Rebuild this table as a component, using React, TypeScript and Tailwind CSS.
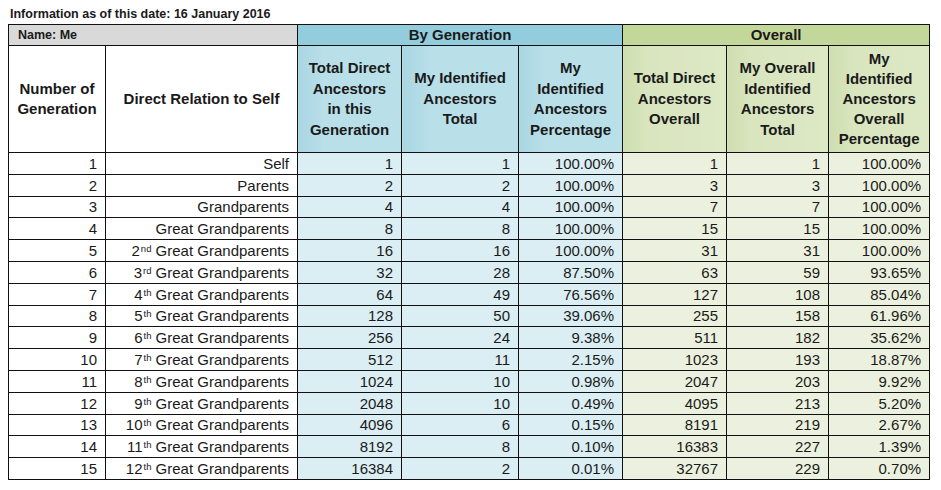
import React from "react";

type Row = {
  gen: number;
  rel: string;
  ord?: string;
  sup?: string;
  total: number;
  mine: number;
  pct: string;
  totalAll: number;
  mineAll: number;
  pctAll: string;
};

const GG = "Great Grandparents";

const ROWS: Row[] = [
  { gen: 1, rel: "Self", total: 1, mine: 1, pct: "100.00%", totalAll: 1, mineAll: 1, pctAll: "100.00%" },
  { gen: 2, rel: "Parents", total: 2, mine: 2, pct: "100.00%", totalAll: 3, mineAll: 3, pctAll: "100.00%" },
  { gen: 3, rel: "Grandparents", total: 4, mine: 4, pct: "100.00%", totalAll: 7, mineAll: 7, pctAll: "100.00%" },
  { gen: 4, rel: GG, total: 8, mine: 8, pct: "100.00%", totalAll: 15, mineAll: 15, pctAll: "100.00%" },
  { gen: 5, rel: GG, ord: "2", sup: "nd", total: 16, mine: 16, pct: "100.00%", totalAll: 31, mineAll: 31, pctAll: "100.00%" },
  { gen: 6, rel: GG, ord: "3", sup: "rd", total: 32, mine: 28, pct: "87.50%", totalAll: 63, mineAll: 59, pctAll: "93.65%" },
  { gen: 7, rel: GG, ord: "4", sup: "th", total: 64, mine: 49, pct: "76.56%", totalAll: 127, mineAll: 108, pctAll: "85.04%" },
  { gen: 8, rel: GG, ord: "5", sup: "th", total: 128, mine: 50, pct: "39.06%", totalAll: 255, mineAll: 158, pctAll: "61.96%" },
  { gen: 9, rel: GG, ord: "6", sup: "th", total: 256, mine: 24, pct: "9.38%", totalAll: 511, mineAll: 182, pctAll: "35.62%" },
  { gen: 10, rel: GG, ord: "7", sup: "th", total: 512, mine: 11, pct: "2.15%", totalAll: 1023, mineAll: 193, pctAll: "18.87%" },
  { gen: 11, rel: GG, ord: "8", sup: "th", total: 1024, mine: 10, pct: "0.98%", totalAll: 2047, mineAll: 203, pctAll: "9.92%" },
  { gen: 12, rel: GG, ord: "9", sup: "th", total: 2048, mine: 10, pct: "0.49%", totalAll: 4095, mineAll: 213, pctAll: "5.20%" },
  { gen: 13, rel: GG, ord: "10", sup: "th", total: 4096, mine: 6, pct: "0.15%", totalAll: 8191, mineAll: 219, pctAll: "2.67%" },
  { gen: 14, rel: GG, ord: "11", sup: "th", total: 8192, mine: 8, pct: "0.10%", totalAll: 16383, mineAll: 227, pctAll: "1.39%" },
  { gen: 15, rel: GG, ord: "12", sup: "th", total: 16384, mine: 2, pct: "0.01%", totalAll: 32767, mineAll: 229, pctAll: "0.70%" },
];

const border = "border border-[#111]";
const headCell = `${border} px-[2px] text-center align-middle text-[15px] font-bold leading-[20.5px]`;
const dataCell = `${border} h-[21.8px] p-0 pr-[8px] pb-[1px] text-right align-bottom text-[15px] leading-[18px]`;
// header cells carry a slight shade toward their left edge, like the sheet's fill
const blueHead = "bg-gradient-to-r from-[#a9d6e2] via-[#b9dfe9] via-25% to-[#b9dfe9]";
const greenHead = "bg-gradient-to-r from-[#cfdeb0] via-[#d9e5bf] via-25% to-[#dde8c4]";
const blueData = "bg-[#daeef3]";
const greenData = "bg-[#ebf1de]";

export default function App() {
  return (
    <div className="h-[490px] w-[941px] overflow-hidden bg-white font-['Liberation_Sans',Arial,sans-serif] text-[#1a1a1a]">
      <div className="h-[24px] pl-[10px] pt-[7px] text-[12.5px] font-bold leading-[14px]">
        Information as of this date: 16 January 2016
      </div>
      <table className="ml-[8px] w-[921px] table-fixed border-collapse">
        <colgroup>
          <col className="w-[97px]" />
          <col className="w-[192px]" />
          <col className="w-[104px]" />
          <col className="w-[117px]" />
          <col className="w-[104px]" />
          <col className="w-[104px]" />
          <col className="w-[102px]" />
          <col className="w-[101px]" />
        </colgroup>
        <thead>
          <tr className="h-[21px]">
            <th
              colSpan={2}
              className={`${border} bg-[#d9d9d9] p-0 pl-[9px] text-left align-middle text-[12.5px] font-bold leading-[14px]`}
            >
              Name: Me
            </th>
            <th colSpan={3} className={`${border} bg-[#93cddd] p-0 text-center align-middle text-[15px] font-bold leading-[18px]`}>
              By Generation
            </th>
            <th colSpan={3} className={`${border} bg-[#c4d79b] p-0 text-center align-middle text-[15px] font-bold leading-[18px]`}>
              Overall
            </th>
          </tr>
          <tr className="h-[107px]">
            <th className={`${headCell} bg-white`}>
              Number of
              <br />
              Generation
            </th>
            <th className={`${headCell} bg-white`}>Direct Relation to Self</th>
            <th className={`${headCell} ${blueHead}`}>
              Total Direct
              <br />
              Ancestors
              <br />
              in this
              <br />
              Generation
            </th>
            <th className={`${headCell} ${blueHead}`}>
              My Identified
              <br />
              Ancestors
              <br />
              Total
            </th>
            <th className={`${headCell} ${blueHead}`}>
              My
              <br />
              Identified
              <br />
              Ancestors
              <br />
              Percentage
            </th>
            <th className={`${headCell} ${greenHead}`}>
              Total Direct
              <br />
              Ancestors
              <br />
              Overall
            </th>
            <th className={`${headCell} ${greenHead}`}>
              My Overall
              <br />
              Identified
              <br />
              Ancestors
              <br />
              Total
            </th>
            <th className={`${headCell} ${greenHead} leading-[20px]`}>
              My
              <br />
              Identified
              <br />
              Ancestors
              <br />
              Overall
              <br />
              Percentage
            </th>
          </tr>
        </thead>
        <tbody>
          {ROWS.map((r) => (
            <tr key={r.gen}>
              <td className={`${dataCell} bg-white`}>{r.gen}</td>
              <td className={`${dataCell} bg-white`}>
                {r.ord ? (
                  <>
                    {r.ord}
                    <span className="relative -top-[4px] ml-[1px] align-baseline text-[9.5px] leading-none">{r.sup}</span>{" "}
                  </>
                ) : null}
                {r.rel}
              </td>
              <td className={`${dataCell} ${blueData}`}>{r.total}</td>
              <td className={`${dataCell} ${blueData}`}>{r.mine}</td>
              <td className={`${dataCell} ${blueData}`}>{r.pct}</td>
              <td className={`${dataCell} ${greenData}`}>{r.totalAll}</td>
              <td className={`${dataCell} ${greenData}`}>{r.mineAll}</td>
              <td className={`${dataCell} ${greenData}`}>{r.pctAll}</td>
            </tr>
          ))}
        </tbody>
      </table>
    </div>
  );
}
